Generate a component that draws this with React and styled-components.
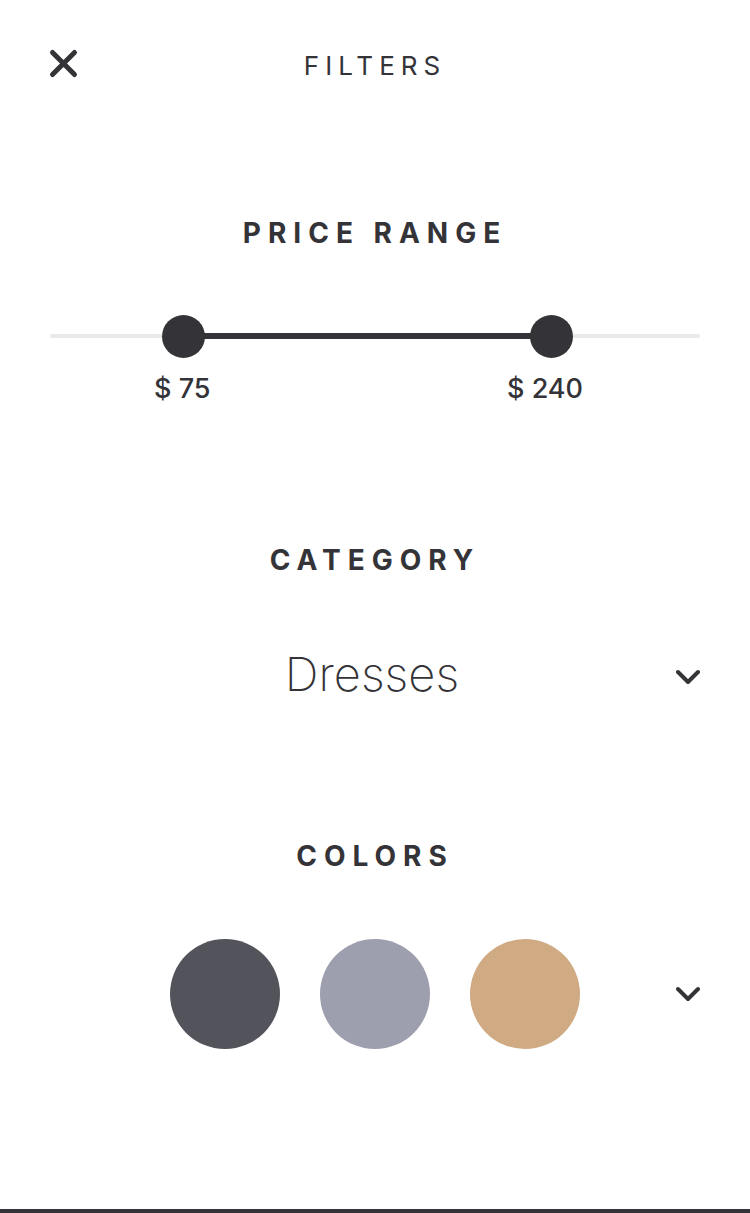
import React, { useState } from 'react';
import styled, { createGlobalStyle } from 'styled-components';

const ink = '#343338';

const GlobalStyle = createGlobalStyle`
  *, *::before, *::after { box-sizing: border-box; }
  body {
    margin: 0;
    background: #fff;
    color: ${ink};
    font-family: Inter, "Open Sans", sans-serif;
  }
`;

const Page = styled.main`
  display: flex;
  flex-direction: column;
  min-height: 100vh;
`;

const Header = styled.header`
  display: grid;
  grid-template-columns: 1fr auto 1fr;
  align-items: start;
  padding: 48px 48px 0;
`;

const IconButton = styled.button`
  display: flex;
  justify-self: ${(p) => p.$side};
  padding: 0;
  border: 0;
  background: none;
  color: inherit;
  cursor: pointer;
`;

const Title = styled.h1`
  margin: 0;
  font-size: 26px;
  line-height: 36px;
  font-weight: 400;
  letter-spacing: 6px;
  text-transform: uppercase;
`;

const Section = styled.section`
  padding: ${(p) => p.$top}px 50px 0;
`;

const Heading = styled.h2`
  margin: 0;
  font-size: 28px;
  line-height: 34px;
  font-weight: 700;
  letter-spacing: 7px;
  text-align: center;
  text-transform: uppercase;
`;

const Slider = styled.div`
  display: grid;
  align-items: center;
  margin-top: 64px;
`;

const Track = styled.div`
  grid-area: 1 / 1;
  height: 4px;
  border-radius: 2px;
  background: #e9e9e9;
`;

const Fill = styled.div`
  grid-area: 1 / 1;
  height: 6px;
  background: ${ink};
`;

const Range = styled.input`
  grid-area: 1 / 1;
  appearance: none;
  width: 100%;
  height: 44px;
  margin: 0;
  background: transparent;
  pointer-events: none;

  &::-webkit-slider-thumb {
    appearance: none;
    width: 43px;
    height: 43px;
    border: 0;
    border-radius: 50%;
    background: ${ink};
    pointer-events: auto;
    cursor: pointer;
  }
`;

const Prices = styled.div`
  display: flex;
  justify-content: space-between;
  padding: 0 18% 0 16%;
  margin-top: 15px;
`;

const Price = styled.output`
  font-size: 27px;
  line-height: 32px;
  font-weight: 500;
`;

const SelectRow = styled.div`
  display: grid;
  align-items: center;
  margin-top: 66px;
`;

const Select = styled.select`
  grid-area: 1 / 1;
  appearance: none;
  width: 100%;
  height: 60px;
  padding: 0 6px 0 0;
  border: 0;
  background: transparent;
  color: inherit;
  font-family: inherit;
  font-size: 47px;
  font-weight: 200;
  text-align-last: center;
  cursor: pointer;
`;

const SelectArrow = styled.span`
  grid-area: 1 / 1;
  justify-self: end;
  display: flex;
  padding-top: 8px;
  pointer-events: none;
`;

const ColorRow = styled.div`
  display: grid;
  grid-template-columns: 1fr auto 1fr;
  align-items: center;
  margin-top: 66px;
`;

const Swatches = styled.div`
  grid-column: 2;
  display: flex;
  gap: 40px;
`;

const Swatch = styled.input`
  appearance: none;
  width: 110px;
  height: 110px;
  margin: 0;
  border-radius: 50%;
  background: ${(p) => p.$color};
  cursor: pointer;
`;

const Footer = styled.footer`
  height: 4px;
  margin-top: auto;
  background: ${ink};
`;

const Chevron = () => (
  <svg width="24" height="16" viewBox="0 0 24 16" fill="none" stroke={ink} strokeWidth="4" strokeLinecap="round" strokeLinejoin="round" aria-hidden="true">
    <path d="M2 3l10 10L22 3" />
  </svg>
);

const MIN = 25;
const MAX = 297;
const percent = (value) => ((value - MIN) / (MAX - MIN)) * 100;

const swatches = [
  { name: 'Charcoal', color: '#53535b' },
  { name: 'Lavender grey', color: '#9d9eae' },
  { name: 'Tan', color: '#cfaa82' },
];

export default function App() {
  const [low, setLow] = useState(75);
  const [high, setHigh] = useState(240);

  return (
    <>
      <GlobalStyle />
      <Page>
        <Header>
          <IconButton type="button" $side="start" aria-label="Close">
            <svg width="32" height="32" viewBox="0 0 32 32" fill="none" stroke={ink} strokeWidth="5" strokeLinecap="round" aria-hidden="true">
              <path d="M4.5 4.5l22 22M26.5 4.5l-22 22" />
            </svg>
          </IconButton>
          <Title>Filters</Title>
        </Header>

        <Section $top={132}>
          <Heading>Price range</Heading>
          <Slider>
            <Track />
            <Fill style={{ marginLeft: `${percent(low)}%`, marginRight: `${100 - percent(high)}%` }} />
            <Range
              id="price-low"
              type="range"
              aria-label="Lowest price"
              min={MIN}
              max={MAX}
              value={low}
              onChange={(e) => setLow(Math.min(Number(e.target.value), high))}
            />
            <Range
              id="price-high"
              type="range"
              aria-label="Highest price"
              min={MIN}
              max={MAX}
              value={high}
              onChange={(e) => setHigh(Math.max(Number(e.target.value), low))}
            />
          </Slider>
          <Prices>
            <Price htmlFor="price-low">$ {low}</Price>
            <Price htmlFor="price-high">$ {high}</Price>
          </Prices>
        </Section>

        <Section $top={138}>
          <Heading id="category-heading">Category</Heading>
          <SelectRow>
            <Select aria-labelledby="category-heading" defaultValue="Dresses">
              <option>Dresses</option>
            </Select>
            <SelectArrow>
              <Chevron />
            </SelectArrow>
          </SelectRow>
        </Section>

        <Section $top={136}>
          <Heading>Colors</Heading>
          <ColorRow>
            <Swatches>
              {swatches.map(({ name, color }) => (
                <Swatch key={name} type="checkbox" aria-label={name} $color={color} />
              ))}
            </Swatches>
            <IconButton type="button" $side="end" aria-label="More colors">
              <Chevron />
            </IconButton>
          </ColorRow>
        </Section>

        <Footer />
      </Page>
    </>
  );
}
